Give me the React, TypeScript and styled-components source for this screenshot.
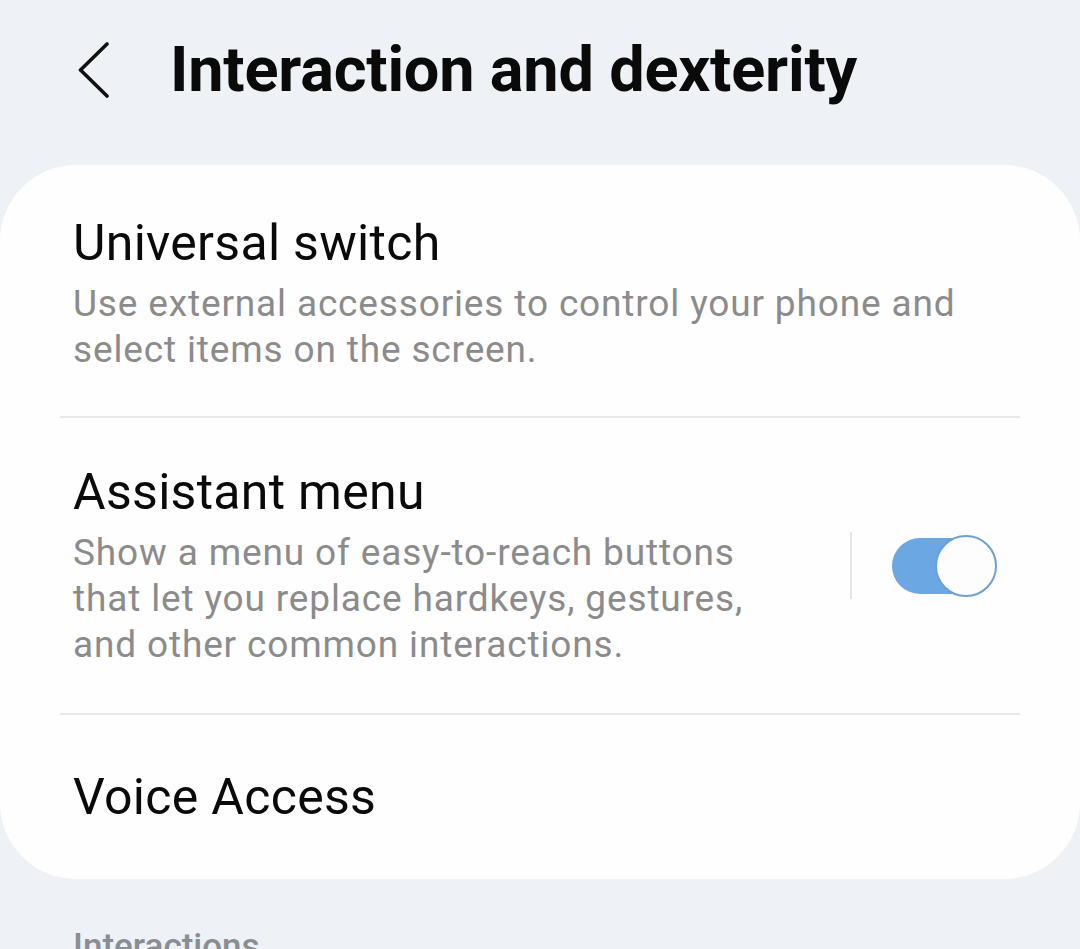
import React from "react";
import styled, { createGlobalStyle } from "styled-components";

const GlobalStyle = createGlobalStyle`
  html, body {
    margin: 0;
    padding: 0;
    background: #eef1f6;
  }
  body {
    font-family: Roboto, "Noto Sans", "Liberation Sans", sans-serif;
    -webkit-font-smoothing: antialiased;
  }
  * { box-sizing: border-box; }
`;

const Page = styled.div`
  width: 1080px;
  height: 949px;
  overflow: hidden;
  background: #eef1f6;
  display: flex;
  flex-direction: column;
  & > * { flex-shrink: 0; }
`;

const Header = styled.header`
  height: 140px;
  display: flex;
  align-items: center;
  padding-left: 77px;
`;

const BackButton = styled.button`
  border: none;
  background: none;
  padding: 0;
  width: 34px;
  height: 56px;
  display: flex;
  color: #111;
`;

const Title = styled.h1`
  margin: 0 0 0 59px;
  font-size: 63px;
  line-height: 1.2;
  font-weight: 700;
  color: #0a0a0a;
  letter-spacing: -0.2px;
`;

const Card = styled.section`
  margin-top: 25px;
  background: #fefefe;
  border-radius: 76px;
  padding: 0 60px;
  display: flex;
  flex-direction: column;
`;

const Item = styled.div<{ $pt: number; $pb: number; $pr?: number; $minH?: number }>`
  display: flex;
  align-items: center;
  padding: ${(p) => p.$pt}px ${(p) => p.$pr ?? 20}px ${(p) => p.$pb}px 13px;
  min-height: ${(p) => (p.$minH ? `${p.$minH}px` : "auto")};
`;

const TextCol = styled.div`
  flex: 1;
  min-width: 0;
  display: flex;
  flex-direction: column;
  gap: 8px;
`;

const ItemTitle = styled.div`
  font-size: 50px;
  line-height: 59px;
  color: #0a0a0a;
  font-weight: 400;
  letter-spacing: 0.3px;
`;

const ItemSub = styled.div`
  font-size: 37px;
  line-height: 46px;
  color: #8b8b8b;
  font-weight: 400;
  letter-spacing: 0.85px;
`;

const Divider = styled.div`
  height: 2px;
  background: #e8e8e8;
`;

const VDivider = styled.div`
  width: 2px;
  height: 67px;
  background: #e6e6e6;
  margin: 0 40px;
  flex-shrink: 0;
`;

const SwitchWrap = styled.div`
  position: relative;
  width: 105px;
  height: 62px;
  flex-shrink: 0;
  display: flex;
  align-items: center;
`;

const Track = styled.div`
  width: 96px;
  height: 56px;
  border-radius: 28px;
  background: #6aa7e3;
`;

const Thumb = styled.div`
  position: absolute;
  left: 43px;
  top: 0;
  width: 62px;
  height: 62px;
  border-radius: 50%;
  background: #fdfdfd;
  border: 2.5px solid #6d9fd4;
`;

const SectionHeader = styled.div`
  margin-top: 47px;
  padding-left: 73px;
  font-size: 35px;
  line-height: 42px;
  font-weight: 500;
  color: #8a8d91;
`;

function Chevron() {
  return (
    <svg width="34" height="56" viewBox="0 0 34 56" fill="none">
      <path
        d="M30 2 L3.5 28 L30 54"
        stroke="currentColor"
        strokeWidth="3.6"
        strokeLinecap="round"
        strokeLinejoin="round"
      />
    </svg>
  );
}

export default function App() {
  return (
    <>
      <GlobalStyle />
      <Page>
        <Header>
          <BackButton aria-label="Back">
            <Chevron />
          </BackButton>
          <Title>Interaction and dexterity</Title>
        </Header>
        <Card>
          <Item $pt={49} $pb={43}>
            <TextCol>
              <ItemTitle>Universal switch</ItemTitle>
              <ItemSub>
                Use external accessories to control your phone and select items on the screen.
              </ItemSub>
            </TextCol>
          </Item>
          <Divider />
          <Item $pt={45} $pb={45} $pr={23}>
            <TextCol>
              <ItemTitle>Assistant menu</ItemTitle>
              <ItemSub>
                Show a menu of easy-to-reach buttons that let you replace hardkeys, gestures, and
                other common interactions.
              </ItemSub>
            </TextCol>
            <VDivider />
            <SwitchWrap>
              <Track />
              <Thumb />
            </SwitchWrap>
          </Item>
          <Divider />
          <Item $pt={0} $pb={0} $minH={164}>
            <TextCol>
              <ItemTitle>Voice Access</ItemTitle>
            </TextCol>
          </Item>
        </Card>
        <SectionHeader>Interactions</SectionHeader>
      </Page>
    </>
  );
}
